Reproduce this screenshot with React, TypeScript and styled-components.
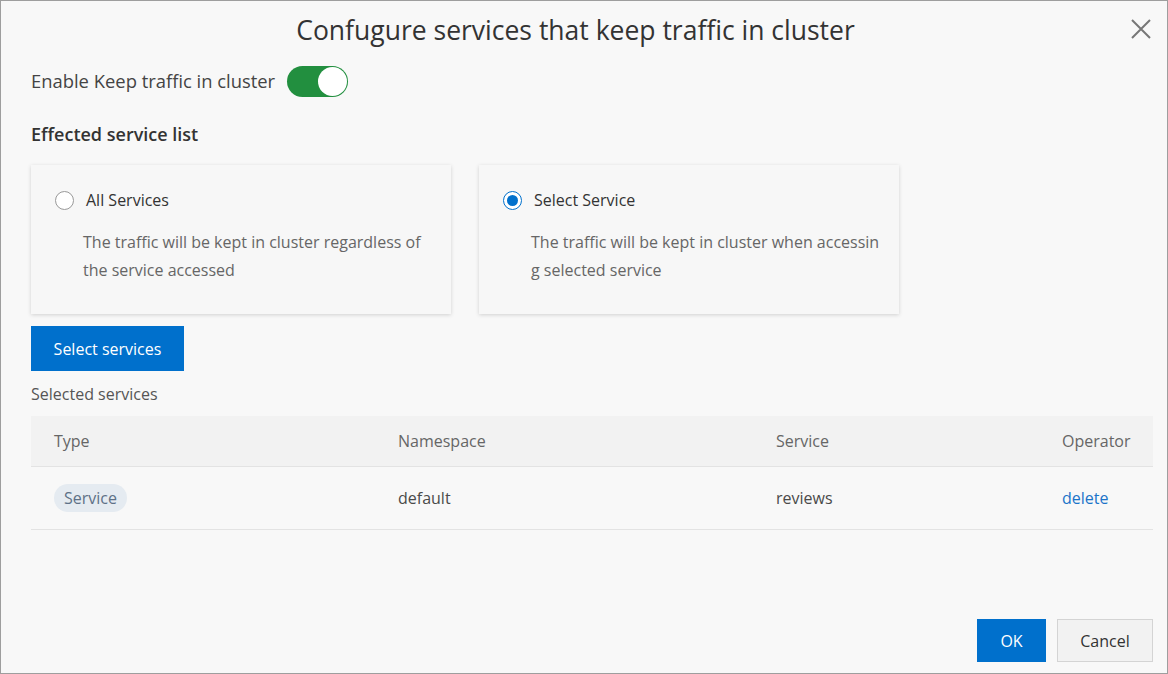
import React from "react";
import styled, { createGlobalStyle } from "styled-components";

const Global = createGlobalStyle`
  html, body { margin: 0; padding: 0; background: #f7f7f7; }
  body { font-family: "Open Sans", "Noto Sans", sans-serif; color: #333; }
  * { box-sizing: border-box; }
`;

const Dialog = styled.div`
  width: 1168px;
  height: 674px;
  border: 1px solid #9e9e9e;
  background: #f8f8f8;
  display: flex;
  flex-direction: column;
  padding: 0 14px 11px 30px;
`;

const Header = styled.div`
  height: 57px;
  display: flex;
  align-items: center;
  justify-content: center;
  position: relative;
`;

const Title = styled.h1`
  margin: 0;
  font-weight: 400;
  font-size: 26.5px;
  color: #333;
  padding-right: 33px;
`;

const Close = styled.button`
  position: absolute;
  right: 1px;
  top: 17px;
  width: 22px;
  height: 22px;
  border: 0;
  background: transparent;
  padding: 0;
  cursor: pointer;
`;

const ToggleRow = styled.div`
  display: flex;
  align-items: center;
  gap: 12px;
  height: 44px;
`;

const Label = styled.span`
  font-size: 18.4px;
  color: #444;
`;

const Switch = styled.div<{ on: boolean }>`
  width: 61px;
  height: 31px;
  border-radius: 16px;
  background: ${(p) => (p.on ? "#228f3f" : "#ccc")};
  position: relative;
  margin-top: 3px;
`;

const Knob = styled.div`
  position: absolute;
  top: 1px;
  right: 1px;
  width: 29px;
  height: 29px;
  border-radius: 50%;
  background: #fff;
`;

const SectionTitle = styled.h2`
  margin: 20px 0 0;
  font-size: 18px;
  font-weight: 600;
  color: #333;
  line-height: 24px;
`;

const Cards = styled.div`
  display: flex;
  gap: 28px;
  margin-top: 19px;
`;

const Card = styled.div`
  width: 420px;
  height: 149px;
  background: #f7f7f7;
  box-shadow: 0 1px 4px rgba(0, 0, 0, 0.16);
  padding: 25px 24px 0;
`;

const RadioLine = styled.div`
  display: flex;
  align-items: center;
  gap: 12px;
  height: 20px;
`;

const Radio = styled.span<{ checked: boolean }>`
  width: 19px;
  height: 19px;
  border-radius: 50%;
  border: 1px solid ${(p) => (p.checked ? "#0070cc" : "#999")};
  background: #fff;
  display: flex;
  align-items: center;
  justify-content: center;
  &::after {
    content: "";
    width: 11px;
    height: 11px;
    border-radius: 50%;
    background: ${(p) => (p.checked ? "#0070cc" : "transparent")};
  }
`;

const RadioLabel = styled.span`
  font-size: 16px;
  color: #333;
`;

const CardDesc = styled.p<{ breakAll?: boolean }>`
  margin: 18px 0 0 28px;
  width: 350px;
  font-size: 16px;
  line-height: 28px;
  color: #666;
  word-break: ${(p) => (p.breakAll ? "break-all" : "normal")};
`;

const PrimaryButton = styled.button`
  background: #0070cc;
  color: #fff;
  border: 0;
  font-family: inherit;
  font-size: 16px;
  padding: 0 23px;
  cursor: pointer;
`;

const SelectButton = styled(PrimaryButton)`
  align-self: flex-start;
  margin-top: 12px;
  height: 45px;
  width: 153px;
  padding: 0;
`;

const SubLabel = styled.div`
  margin-top: 12px;
  font-size: 16px;
  color: #555;
  line-height: 22px;
`;

const Table = styled.div`
  margin-top: 11px;
  display: flex;
  flex-direction: column;
`;

const Row = styled.div<{ head?: boolean }>`
  display: grid;
  grid-template-columns: 344px 378px 1fr 91px;
  align-items: center;
  height: ${(p) => (p.head ? "51px" : "63px")};
  background: ${(p) => (p.head ? "#f2f2f2" : "transparent")};
  border-bottom: 1px solid #e3e3e3;
  padding-left: 23px;
  font-size: 16px;
  color: ${(p) => (p.head ? "#666" : "#4a4a4a")};
`;

const Tag = styled.span`
  display: inline-block;
  background: #e5ebf1;
  color: #5e7187;
  border-radius: 14px;
  padding: 3px 10px;
  line-height: 22px;
`;

const Cell = styled.div``;

const Link = styled.a`
  color: #1b74c9;
  text-decoration: none;
  cursor: pointer;
`;

const Footer = styled.div`
  margin-top: auto;
  display: flex;
  justify-content: flex-end;
  gap: 11px;
`;

const OkButton = styled(PrimaryButton)`
  height: 43px;
  width: 69px;
  padding: 0;
`;

const CancelButton = styled.button`
  height: 43px;
  width: 96px;
  background: #f2f2f2;
  border: 1px solid #d4d4d4;
  color: #333;
  font-family: inherit;
  font-size: 16px;
  cursor: pointer;
`;

export default function App() {
  return (
    <>
      <Global />
      <Dialog>
        <Header>
          <Title>Confugure services that keep traffic in cluster</Title>
          <Close aria-label="close">
            <svg width="22" height="22" viewBox="0 0 22 22">
              <path d="M2 2 L20 20 M20 2 L2 20" stroke="#777" strokeWidth="2" fill="none" />
            </svg>
          </Close>
        </Header>
        <ToggleRow>
          <Label>Enable Keep traffic in cluster</Label>
          <Switch on>
            <Knob />
          </Switch>
        </ToggleRow>
        <SectionTitle>Effected service list</SectionTitle>
        <Cards>
          <Card>
            <RadioLine>
              <Radio checked={false} />
              <RadioLabel>All Services</RadioLabel>
            </RadioLine>
            <CardDesc>The traffic will be kept in cluster regardless of the service accessed</CardDesc>
          </Card>
          <Card>
            <RadioLine>
              <Radio checked />
              <RadioLabel>Select Service</RadioLabel>
            </RadioLine>
            <CardDesc breakAll>The traffic will be kept in cluster when accessing selected service</CardDesc>
          </Card>
        </Cards>
        <SelectButton>Select services</SelectButton>
        <SubLabel>Selected services</SubLabel>
        <Table>
          <Row head>
            <Cell>Type</Cell>
            <Cell>Namespace</Cell>
            <Cell>Service</Cell>
            <Cell>Operator</Cell>
          </Row>
          <Row>
            <Cell>
              <Tag>Service</Tag>
            </Cell>
            <Cell>default</Cell>
            <Cell>reviews</Cell>
            <Cell>
              <Link>delete</Link>
            </Cell>
          </Row>
        </Table>
        <Footer>
          <OkButton>OK</OkButton>
          <CancelButton>Cancel</CancelButton>
        </Footer>
      </Dialog>
    </>
  );
}
